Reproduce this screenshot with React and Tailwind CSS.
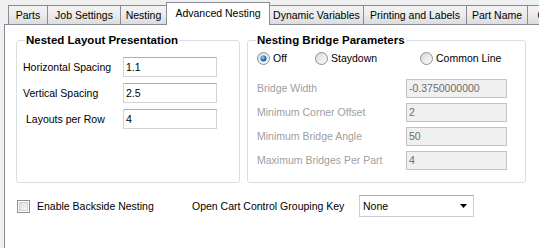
import React, { useState } from "react";

const tabs = [
  { label: "Parts", width: "w-[40px]" },
  { label: "Job Settings", width: "w-[74px]" },
  { label: "Nesting", width: "w-[47px]" },
  { label: "Advanced Nesting", width: "w-[104px]", active: true },
  { label: "Dynamic Variables", width: "w-[95px]" },
  { label: "Printing and Labels", width: "w-[104px]" },
  { label: "Part Name", width: "w-[62px]" },
  { label: "Cart Options", width: "w-[80px]" },
];

function Tab({ label, width, active }) {
  if (active) {
    return (
      <div
        className={`${width} relative z-10 -mb-px -ml-px flex h-[23px] shrink-0 items-start justify-center border border-b-0 border-[#898c95] bg-white pt-[4px]`}
      >
        {label}
      </div>
    );
  }
  return (
    <div
      className={`${width} -ml-px flex h-[19px] shrink-0 items-center justify-center border border-b-0 border-[#898c95] bg-gradient-to-b from-[#f3f3f3] via-[#ebebeb] to-[#dcdcdc] whitespace-nowrap first:ml-0`}
    >
      {label}
    </div>
  );
}

function TextBox({ value, disabled }) {
  return (
    <div
      className={
        disabled
          ? "flex h-[19px] w-[101px] items-center border border-[#c4c4c4] bg-[#f0f0f0] pl-[2px] text-[#6d6d6d]"
          : "flex h-[20px] w-[94px] items-center border border-[#d0d3d9] border-t-[#abadb3] bg-white pl-[2px]"
      }
    >
      {value}
    </div>
  );
}

function Radio({ checked }) {
  return (
    <svg width="13" height="13" viewBox="0 0 13 13" className="shrink-0">
      <defs>
        <linearGradient id="rbg" x1="0" y1="0" x2="1" y2="1">
          <stop offset="0" stopColor="#d8d8d8" />
          <stop offset="1" stopColor="#fdfdfd" />
        </linearGradient>
        <radialGradient id="rdot" cx="0.4" cy="0.35" r="0.7">
          <stop offset="0" stopColor="#a9dcf6" />
          <stop offset="0.5" stopColor="#2c7fc8" />
          <stop offset="1" stopColor="#0d4a8a" />
        </radialGradient>
      </defs>
      <circle cx="6.5" cy="6.5" r="6" fill="url(#rbg)" stroke="#8e8f8f" />
      {checked && <circle cx="6.5" cy="6.5" r="3" fill="url(#rdot)" />}
    </svg>
  );
}

export default function App() {
  const [bridgeMode, setBridgeMode] = useState("off");
  const [backside, setBackside] = useState(false);

  return (
    <div
      className="h-[248px] w-[539px] overflow-hidden bg-[#f0f0f0] text-[10.5px] leading-[13px] text-black"
      style={{ fontFamily: '"Liberation Sans", Arial, sans-serif' }}
    >
      <div className="flex h-[24px] items-end pl-[8px]">
        {tabs.map((t) => (
          <Tab key={t.label} {...t} />
        ))}
      </div>

      <div className="ml-[4px] h-[224px] border-l border-t border-[#898c95] bg-white pl-[11px] pt-[8px]">
        <div className="flex gap-[7px]">
          <fieldset className="h-[150px] w-[224px] rounded-[3px] border border-[#d5dfe5]">
            <legend className="ml-[8px] px-[1px] text-[11.5px] font-bold leading-[14px]">
              Nested Layout Presentation
            </legend>
            <div className="mt-[10px] grid grid-cols-[100px_94px] items-center gap-y-[6px] pl-[6px]">
              <span>Horizontal Spacing</span>
              <TextBox value="1.1" />
              <span>Vertical Spacing</span>
              <TextBox value="2.5" />
              <span className="pl-[3px]">Layouts per Row</span>
              <TextBox value="4" />
            </div>
          </fieldset>

          <fieldset className="h-[150px] w-[279px] rounded-[3px] border border-[#d5dfe5]">
            <legend className="ml-[8px] px-[1px] text-[11.5px] font-bold leading-[14px]">
              Nesting Bridge Parameters
            </legend>
            <div className="mt-[5px] flex pl-[9px]">
              {[
                { key: "off", label: "Off", w: "w-[58px]" },
                { key: "staydown", label: "Staydown", w: "w-[105px]" },
                { key: "common", label: "Common Line", w: "w-[100px]" },
              ].map((r) => (
                <label
                  key={r.key}
                  className={`${r.w} flex cursor-default items-center gap-[3px]`}
                  onClick={() => setBridgeMode(r.key)}
                >
                  <Radio checked={bridgeMode === r.key} />
                  <span>{r.label}</span>
                </label>
              ))}
            </div>
            <div className="mt-[14px] grid grid-cols-[149px_101px] items-center gap-y-[5px] pl-[9px] text-[#a0a0a0]">
              <span>Bridge Width</span>
              <TextBox value="-0.3750000000" disabled />
              <span>Minimum Corner Offset</span>
              <TextBox value="2" disabled />
              <span>Minimum Bridge Angle</span>
              <TextBox value="50" disabled />
              <span>Maximum Bridges Per Part</span>
              <TextBox value="4" disabled />
            </div>
          </fieldset>
        </div>

        <div className="mt-[12px] flex h-[22px] items-center">
          <label
            className="flex w-[176px] cursor-default items-center gap-[7px] pl-[1px]"
            onClick={() => setBackside(!backside)}
          >
            <span className="flex h-[13px] w-[13px] items-center justify-center border border-[#8e8f8f] bg-white">
              <span className="h-[9px] w-[9px] border border-[#d0d0d0] bg-gradient-to-br from-[#dcdcdc] to-[#fafafa] text-[9px] leading-[9px]">
                {backside ? "✓" : ""}
              </span>
            </span>
            <span>Enable Backside Nesting</span>
          </label>
          <span className="w-[167px]">Open Cart Control Grouping Key</span>
          <div className="flex h-[22px] w-[115px] items-center justify-between border border-[#c9ccd2] border-t-[#abadb3] bg-white pl-[3px] pr-[6px]">
            <span>None</span>
            <svg width="7" height="4" viewBox="0 0 7 4">
              <path d="M0 0h7L3.5 4z" fill="#000" />
            </svg>
          </div>
        </div>
      </div>
    </div>
  );
}
